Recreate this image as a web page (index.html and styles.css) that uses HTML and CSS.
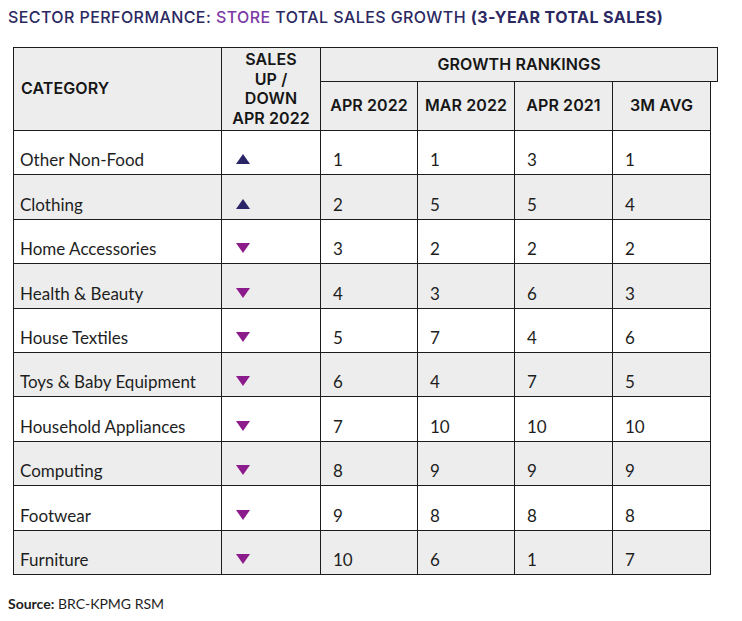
FILE: index.html
```html
<!DOCTYPE html>
<html>
<head>
<meta charset="utf-8">
<link rel="stylesheet" href="styles.css">
</head>
<body>
<div class="page">
  <h1 class="title">SECTOR PERFORMANCE: <span class="accent">STORE</span> TOTAL SALES GROWTH <span class="strong">(3-YEAR TOTAL SALES)</span></h1>
  <table class="perf">
    <colgroup>
      <col class="c-cat"><col class="c-dir"><col class="c-n1"><col class="c-n2"><col class="c-n3"><col class="c-n4"><col class="c-pad">
    </colgroup>
    <thead>
      <tr class="h1">
        <th rowspan="2" class="th-left">CATEGORY</th>
        <th rowspan="2" class="th-dir">SALES<br>UP /<br>DOWN<br>APR 2022</th>
        <th colspan="5">GROWTH RANKINGS</th>
      </tr>
      <tr class="h2">
        <th>APR 2022</th><th>MAR 2022</th><th>APR 2021</th><th>3M AVG</th><th class="pad"></th>
      </tr>
    </thead>
    <tbody>
      <tr><td class="cat">Other Non-Food</td><td class="dir"><svg class="tri up" viewBox="0 0 14 10" width="14" height="10"><polygon points="7,0 14,10 0,10"/></svg></td><td>1</td><td>1</td><td>3</td><td>1</td><td class="pad"></td></tr>
      <tr class="alt"><td class="cat">Clothing</td><td class="dir"><svg class="tri up" viewBox="0 0 14 10" width="14" height="10"><polygon points="7,0 14,10 0,10"/></svg></td><td>2</td><td>5</td><td>5</td><td>4</td><td class="pad"></td></tr>
      <tr><td class="cat">Home Accessories</td><td class="dir"><svg class="tri down" viewBox="0 0 14 10" width="14" height="10"><polygon points="0,0 14,0 7,10"/></svg></td><td>3</td><td>2</td><td>2</td><td>2</td><td class="pad"></td></tr>
      <tr class="alt"><td class="cat">Health &amp; Beauty</td><td class="dir"><svg class="tri down" viewBox="0 0 14 10" width="14" height="10"><polygon points="0,0 14,0 7,10"/></svg></td><td>4</td><td>3</td><td>6</td><td>3</td><td class="pad"></td></tr>
      <tr><td class="cat">House Textiles</td><td class="dir"><svg class="tri down" viewBox="0 0 14 10" width="14" height="10"><polygon points="0,0 14,0 7,10"/></svg></td><td>5</td><td>7</td><td>4</td><td>6</td><td class="pad"></td></tr>
      <tr class="alt"><td class="cat">Toys &amp; Baby Equipment</td><td class="dir"><svg class="tri down" viewBox="0 0 14 10" width="14" height="10"><polygon points="0,0 14,0 7,10"/></svg></td><td>6</td><td>4</td><td>7</td><td>5</td><td class="pad"></td></tr>
      <tr><td class="cat">Household Appliances</td><td class="dir"><svg class="tri down" viewBox="0 0 14 10" width="14" height="10"><polygon points="0,0 14,0 7,10"/></svg></td><td>7</td><td>10</td><td>10</td><td>10</td><td class="pad"></td></tr>
      <tr class="alt"><td class="cat">Computing</td><td class="dir"><svg class="tri down" viewBox="0 0 14 10" width="14" height="10"><polygon points="0,0 14,0 7,10"/></svg></td><td>8</td><td>9</td><td>9</td><td>9</td><td class="pad"></td></tr>
      <tr><td class="cat">Footwear</td><td class="dir"><svg class="tri down" viewBox="0 0 14 10" width="14" height="10"><polygon points="0,0 14,0 7,10"/></svg></td><td>9</td><td>8</td><td>8</td><td>8</td><td class="pad"></td></tr>
      <tr class="alt"><td class="cat">Furniture</td><td class="dir"><svg class="tri down" viewBox="0 0 14 10" width="14" height="10"><polygon points="0,0 14,0 7,10"/></svg></td><td>10</td><td>6</td><td>1</td><td>7</td><td class="pad"></td></tr>
    </tbody>
  </table>
  <p class="source"><b>Source:</b> BRC-KPMG RSM</p>
</div>
</body>
</html>
```

FILE: styles.css
```css
html, body {
  margin: 0;
  padding: 0;
  background: #ffffff;
}

.page {
  padding: 7px 0 0 8px;
  width: 734px;
}

.title {
  margin: 0;
  font-family: "Inter", "Noto Sans", sans-serif;
  font-weight: 500;
  font-size: 16px;
  line-height: 20px;
  color: #2b2862;
  letter-spacing: 0.42px;
  white-space: nowrap;
}

.title .accent {
  color: #7c3aa6;
}

.title .strong {
  font-weight: 700;
}

.perf {
  margin: 20px 0 0 5px;
  border-collapse: collapse;
  table-layout: fixed;
  width: 704px;
}

.c-cat { width: 208px; }
.c-dir { width: 99px; }
.c-n1 { width: 97px; }
.c-n2 { width: 97px; }
.c-n3 { width: 98px; }
.c-n4 { width: 98px; }
.c-pad { width: 7px; }

.perf th {
  background: #ededed;
  border: 1px solid #1c1c1c;
  font-family: "Inter", "Noto Sans", sans-serif;
  font-weight: 600;
  font-size: 16px;
  line-height: 19.5px;
  letter-spacing: 0.1px;
  color: #161616;
  text-align: center;
  vertical-align: middle;
  padding: 0;
  white-space: nowrap;
}

.perf .h1 { height: 34px; }
.perf .h2 { height: 49px; }

.perf th.th-left {
  text-align: left;
  padding-left: 7px;
}

.perf th.pad,
.perf td.pad {
  border: none;
  background: transparent;
}

.perf tbody tr {
  height: 44.4px;
}

.perf td {
  border: 1px solid #1c1c1c;
  font-family: "Lato", sans-serif;
  font-size: 17px;
  line-height: 20px;
  color: #1e1e1e;
  vertical-align: bottom;
  padding: 0 0 4px 12px;
  white-space: nowrap;
}

.perf td.cat {
  padding-left: 6px;
}

.perf td.dir {
  padding-left: 14px;
  padding-bottom: 10px;
}

.perf tbody tr.alt td:not(.pad) {
  background: #ededed;
}

.tri {
  display: block;
}

.tri.up polygon { fill: #2a2566; }
.tri.down polygon { fill: #8c1c8c; }

.source {
  margin: 20px 0 0 0;
  font-family: "Lato", sans-serif;
  font-size: 14px;
  color: #1e1e1e;
}

.source b {
  font-weight: 700;
}
```
